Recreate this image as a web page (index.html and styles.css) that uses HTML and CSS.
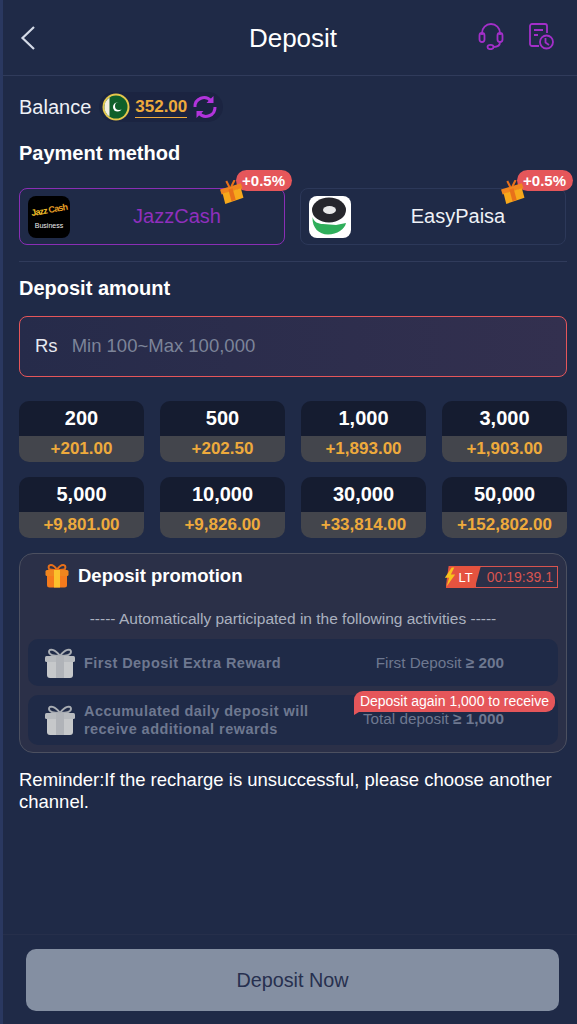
FILE: index.html
```html
<!DOCTYPE html>
<html lang="en">
<head>
    <meta charset="UTF-8">
    <meta name="viewport" content="width=device-width, initial-scale=1.0">
    <title>Deposit</title>
    <link rel="stylesheet" href="styles.css">
</head>
<body>
    <div class="page">
        <header class="topbar">
            <svg class="back" width="18" height="26" viewBox="0 0 18 26"><path d="M15 2 L3.500 13 L15 24" fill="none" stroke="#d5dbe8" stroke-width="2.200"/></svg>
            <h1>Deposit</h1>
            <div class="topbar-icons">
                <svg width="28" height="28" viewBox="0 0 28 28" fill="none" stroke="#a32fc9" stroke-width="1.800">
                    <path d="M5 13 V11 a9 9 0 0 1 18 0 V13"/>
                    <rect x="2.500" y="11" width="5" height="9" rx="2.500"/>
                    <rect x="20.500" y="11" width="5" height="9" rx="2.500"/>
                    <path d="M23 20 C23 24 20 25 16.500 25"/>
                    <ellipse cx="13.500" cy="25" rx="3" ry="2.200"/>
                </svg>
                <svg width="28" height="28" viewBox="0 0 28 28" fill="none" stroke="#a32fc9" stroke-width="1.800">
                    <path d="M11 24 H4 a2 2 0 0 1 -2 -2 V4 a2 2 0 0 1 2 -2 H17 a2 2 0 0 1 2 2 V11"/>
                    <path d="M6 8 H15 M6 13 H10"/>
                    <circle cx="18.500" cy="20" r="6.500"/>
                    <path d="M17.500 16 V20.500 L21 23"/>
                </svg>
            </div>
        </header>

        <main class="content">
            <div class="balance-row">
                <span class="balance-label">Balance</span>
                <div class="balance-pill">
                    <svg width="28" height="28" viewBox="0 0 28 28">
                        <circle cx="14" cy="14" r="13.500" fill="#e4c74c"/>
                        <circle cx="14" cy="14" r="11.500" fill="#0f5f2a"/>
                        <path d="M2.500 14 a11.500 11.500 0 0 1 5 -9.500 V23.500 a11.500 11.500 0 0 1 -5 -9.500 Z" fill="#f3efe0"/>
                        <circle cx="15.500" cy="14" r="4.500" fill="#fff"/>
                        <circle cx="17" cy="13" r="4" fill="#0f5f2a"/>
                    </svg>
                    <span class="balance-value">352.00</span>
                    <svg width="26" height="26" viewBox="0 0 26 26" fill="none" stroke="#b234dc" stroke-width="3">
                        <path d="M3 13 a9 9 0 0 1 16 -6"/>
                        <path d="M23 13 a9 9 0 0 1 -16 6"/>
                        <path d="M21.500 2 V9 H14.500 Z" fill="#b234dc" stroke="none"/>
                        <path d="M4.500 24 V17 H11.500 Z" fill="#b234dc" stroke="none"/>
                    </svg>
                </div>
            </div>

            <h2 class="section-title method-title">Payment method</h2>
            <div class="methods">
                <div class="method method-active">
                    <div class="method-logo logo-jazz">
                        <span class="jazz-name"><span class="jazz-word">Jazz</span> <span class="cash-word">Cash</span></span>
                        <span class="jazz-sub">Business</span>
                    </div>
                    <span class="method-name">JazzCash</span>
                    <div class="bonus">
                        <svg class="gift" width="25" height="25" viewBox="0 0 24 24">
                            <path d="M1 9 L21 3 L22.500 8 L2.500 14 Z" fill="#f0851e"/>
                            <path d="M3.500 13 L21 8 L23.500 17 L6 23 Z" fill="#f7a81b"/>
                            <path d="M9 9 L13 8 L16 19 L12 20.500 Z" fill="#e8701a"/>
                            <path d="M10 7 L7 1 M12 6 L15 0" stroke="#e8701a" stroke-width="2"/>
                        </svg>
                        <span class="bonus-tag">+0.5%</span>
                    </div>
                </div>
                <div class="method">
                    <div class="method-logo logo-easy">
                        <svg width="42" height="42" viewBox="0 0 42 42">
                            <path d="M3.500 21 C5 26 9 28 14 28 L27 29 L37 27 C36 33 28 38.500 19 38.500 C10 38.500 3 32 3.500 21 Z" fill="#2fae5b"/>
                            <ellipse cx="20" cy="14" rx="17" ry="12.500" fill="#26262c"/>
                            <ellipse cx="20.500" cy="14" rx="6.500" ry="4" fill="#e8e8e8"/>
                        </svg>
                    </div>
                    <span class="method-name">EasyPaisa</span>
                    <div class="bonus">
                        <svg class="gift" width="25" height="25" viewBox="0 0 24 24">
                            <path d="M1 9 L21 3 L22.500 8 L2.500 14 Z" fill="#f0851e"/>
                            <path d="M3.500 13 L21 8 L23.500 17 L6 23 Z" fill="#f7a81b"/>
                            <path d="M9 9 L13 8 L16 19 L12 20.500 Z" fill="#e8701a"/>
                            <path d="M10 7 L7 1 M12 6 L15 0" stroke="#e8701a" stroke-width="2"/>
                        </svg>
                        <span class="bonus-tag">+0.5%</span>
                    </div>
                </div>
            </div>

            <div class="divider"></div>

            <h2 class="section-title amount-title">Deposit amount</h2>
            <div class="amount-input">
                <span class="currency">Rs</span>
                <span class="placeholder">Min 100~Max 100,000</span>
            </div>

            <div class="amounts">
                <div class="amount"><div class="amount-top">200</div><div class="amount-bottom">+201.00</div></div>
                <div class="amount"><div class="amount-top">500</div><div class="amount-bottom">+202.50</div></div>
                <div class="amount"><div class="amount-top">1,000</div><div class="amount-bottom">+1,893.00</div></div>
                <div class="amount"><div class="amount-top">3,000</div><div class="amount-bottom">+1,903.00</div></div>
                <div class="amount"><div class="amount-top">5,000</div><div class="amount-bottom">+9,801.00</div></div>
                <div class="amount"><div class="amount-top">10,000</div><div class="amount-bottom">+9,826.00</div></div>
                <div class="amount"><div class="amount-top">30,000</div><div class="amount-bottom">+33,814.00</div></div>
                <div class="amount"><div class="amount-top">50,000</div><div class="amount-bottom">+152,802.00</div></div>
            </div>

            <section class="promo">
                <div class="promo-head">
                    <div class="promo-title">
                        <svg width="26" height="26" viewBox="0 0 26 26">
                            <path d="M13 7 C9 0 3 1 5 6 C6 7 9 7 13 7 C17 7 20 7 21 6 C23 1 17 0 13 7 Z" fill="none" stroke="#e8701a" stroke-width="2"/>
                            <rect x="1.500" y="7" width="23" height="6" rx="1.500" fill="#f0851e"/>
                            <path d="M3 13 H23 V22 a2.500 2.500 0 0 1 -2.500 2.500 H5.500 A2.500 2.500 0 0 1 3 22 Z" fill="#f57a1c"/>
                            <rect x="10" y="7" width="6" height="17.500" fill="#fcc12c"/>
                        </svg>
                        <span>Deposit promotion</span>
                    </div>
                    <div class="timer">
                        <div class="timer-tag">
                            <svg width="12" height="20" viewBox="0 0 14 22"><path d="M9 0 L1 12 H6 L3 22 L13 8 H8 L12 0 Z" fill="#f7c21c"/></svg>
                            <span>LT</span>
                        </div>
                        <span class="timer-value">00:19:39.1</span>
                    </div>
                </div>
                <p class="promo-note">----- Automatically participated in the following activities -----</p>
                <div class="promo-row">
                    <svg class="silver-gift" width="32" height="32" viewBox="0 0 32 32">
                        <path d="M16 9 C11 2 5 1 5 5 C5 8 10 9 16 9 C22 9 27 8 27 5 C27 1 21 2 16 9 Z" fill="none" stroke="#a9adb3" stroke-width="2"/>
                        <rect x="1" y="9" width="30" height="6" rx="1.500" fill="#b8bbbf"/>
                        <path d="M3 15 H29 V28 a3 3 0 0 1 -3 3 H6 a3 3 0 0 1 -3 -3 Z" fill="#c6c8ca"/>
                        <rect x="12" y="9" width="8" height="22" fill="#b0b3b8"/>
                    </svg>
                    <span class="promo-name">First Deposit Extra Reward</span>
                    <span class="promo-req">First Deposit <b>≥ 200</b></span>
                </div>
                <div class="promo-row promo-row-last">
                    <svg class="silver-gift" width="32" height="32" viewBox="0 0 32 32">
                        <path d="M16 9 C11 2 5 1 5 5 C5 8 10 9 16 9 C22 9 27 8 27 5 C27 1 21 2 16 9 Z" fill="none" stroke="#a9adb3" stroke-width="2"/>
                        <rect x="1" y="9" width="30" height="6" rx="1.500" fill="#b8bbbf"/>
                        <path d="M3 15 H29 V28 a3 3 0 0 1 -3 3 H6 a3 3 0 0 1 -3 -3 Z" fill="#c6c8ca"/>
                        <rect x="12" y="9" width="8" height="22" fill="#b0b3b8"/>
                    </svg>
                    <span class="promo-name">Accumulated daily deposit will<br>receive additional rewards</span>
                    <span class="promo-req">Total deposit <b>≥ 1,000</b></span>
                    <span class="promo-bubble">Deposit again 1,000 to receive</span>
                </div>
            </section>

            <p class="reminder">Reminder:If the recharge is unsuccessful, please choose another channel.</p>
        </main>

        <footer class="footer">
            <button class="submit">Deposit Now</button>
        </footer>
    </div>
</body>
</html>
```

FILE: styles.css
```css
* {
    box-sizing: border-box;
}
body {
    margin: 0;
    background-color: #1f2a47;
    font-family: "Liberation Sans", Arial, sans-serif;
    color: #eef1f6;
}
.page {
    height: 1024px;
    border-left: 3px solid #2a3860;
    display: flex;
    flex-direction: column;
    overflow: hidden;
}

/* header */
.topbar {
    height: 76px;
    flex: none;
    border-bottom: 1px solid #303b5b;
    display: flex;
    align-items: center;
    position: relative;
    padding: 0 21px 0 16px;
}
.topbar h1 {
    position: absolute;
    left: 6px;
    right: 0;
    margin: 2px 0 0;
    text-align: center;
    font-size: 26px;
    font-weight: 400;
    color: #fff;
}
.topbar-icons {
    margin-left: auto;
    display: flex;
    gap: 23px;
    margin-top: -3px;
}

.content {
    flex: 1;
    padding: 0 10px 0 16px;
}

/* balance */
.balance-row {
    display: flex;
    align-items: center;
    gap: 8px;
    height: 34px;
    margin-top: 14px;
}
.balance-label {
    font-size: 20px;
}
.balance-pill {
    display: flex;
    align-items: center;
    gap: 5px;
    height: 30px;
    padding: 0 5px 0 3px;
    border-radius: 15px;
    background: #1b2441;
}
.balance-value {
    font-size: 17px;
    font-weight: 700;
    color: #eeaa3c;
    border-bottom: 1px solid #eeaa3c;
    line-height: 21px;
}

.section-title {
    margin: 0;
    font-size: 20px;
    font-weight: 700;
    color: #fff;
    line-height: 24px;
}
.method-title {
    margin-top: 17px;
}
.amount-title {
    margin-top: 14px;
}

/* payment methods */
.methods {
    display: grid;
    grid-template-columns: 266px 266px;
    gap: 15px;
    margin-top: 23px;
}
.method {
    height: 57px;
    border: 1px solid #2c3859;
    border-radius: 8px;
    display: flex;
    align-items: center;
    padding-left: 8px;
    position: relative;
}
.method-active {
    border-color: #8a2eb5;
}
.method-logo {
    width: 42px;
    height: 42px;
    flex: none;
    border-radius: 8px;
    overflow: hidden;
}
.logo-jazz {
    background: #000;
    display: flex;
    flex-direction: column;
    align-items: center;
    justify-content: center;
    gap: 7px;
}
.jazz-name {
    font-size: 9px;
    font-weight: 700;
    transform: rotate(-10deg);
    letter-spacing: -0.8px;
    white-space: nowrap;
}
.jazz-word {
    color: #f5c02a;
}
.cash-word {
    color: #e9a126;
}
.jazz-sub {
    font-size: 7px;
    color: #eee;
}
.logo-easy {
    background: #fff;
}
.method-name {
    flex: 1;
    text-align: center;
    font-size: 20px;
}
.method-active .method-name {
    color: #8f2fbd;
}
.bonus {
    position: absolute;
    right: -8px;
    top: -19px;
}
.bonus-tag {
    display: block;
    background: #e5565a;
    color: #fff;
    font-size: 15px;
    font-weight: 700;
    line-height: 21px;
    padding: 0 7px 0 6px;
    border-radius: 11px;
}
.gift {
    position: absolute;
    left: -17px;
    top: 10px;
}

.divider {
    height: 1px;
    background: #303b5b;
    margin-top: 16px;
}

/* amount */
.amount-input {
    height: 61px;
    margin-top: 16px;
    border: 1px solid #e5565a;
    border-radius: 8px;
    background: linear-gradient(90deg, #262b4a, #33304f);
    display: flex;
    align-items: center;
    padding: 0 0 1px 15px;
    font-size: 18.500px;
}
.currency {
    color: #e6e9f0;
    margin-right: 14px;
}
.placeholder {
    color: #7c8499;
}
.amounts {
    display: grid;
    grid-template-columns: repeat(4, 125px);
    column-gap: 16px;
    row-gap: 15px;
    margin-top: 24px;
}
.amount {
    height: 61px;
    border-radius: 10px;
    overflow: hidden;
    text-align: center;
    font-weight: 700;
}
.amount-top {
    height: 35px;
    background: #151c30;
    color: #fff;
    font-size: 20px;
    line-height: 35px;
}
.amount-bottom {
    height: 26px;
    background: #43454c;
    color: #eeaa3c;
    font-size: 17px;
    line-height: 26px;
}

/* promo */
.promo {
    height: 200px;
    margin-top: 15px;
    border: 1px solid #4c5060;
    border-radius: 14px;
    background: #2b3048;
    padding: 0 8px;
}
.promo-head {
    height: 44px;
    display: flex;
    align-items: center;
    justify-content: space-between;
}
.promo-title {
    display: flex;
    align-items: center;
    gap: 8px;
    padding-left: 16px;
    font-size: 18.500px;
    font-weight: 700;
    color: #fff;
}
.timer {
    display: flex;
    align-items: stretch;
    height: 22px;
    margin-top: 2px;
}
.timer-tag {
    display: flex;
    align-items: center;
    gap: 3px;
    position: relative;
    padding: 0 8px 0 0;
    font-size: 13px;
    color: #fff;
    margin-right: -6px;
}
.timer-tag::before {
    content: "";
    position: absolute;
    top: 0;
    right: 0;
    bottom: 0;
    left: 2px;
    background: #e5533f;
    clip-path: polygon(3px 0, 100% 0, calc(100% - 6px) 100%, 0 100%);
}
.timer-tag svg,
.timer-tag span {
    position: relative;
}
.timer-value {
    border: 1px solid #d8544f;
    color: #d8544f;
    font-size: 14px;
    line-height: 20px;
    padding: 0 4px 0 11px;
}
.promo-note {
    margin: 11px 0 0;
    text-align: center;
    font-size: 15.500px;
    line-height: 20px;
    color: #aab0bf;
}
.promo-row {
    height: 47px;
    margin-top: 10px;
    display: flex;
    align-items: center;
    padding-left: 16px;
    border-radius: 10px;
    background: #1f2a47;
    position: relative;
}
.promo-row-last {
    height: 50px;
    margin-top: 9px;
}
.silver-gift {
    flex: none;
}
.promo-name {
    width: 256px;
    margin-left: 8px;
    font-size: 14.500px;
    font-weight: 700;
    letter-spacing: 0.45px;
    line-height: 18px;
    color: #6e7890;
    white-space: nowrap;
}
.promo-req {
    flex: 1;
    text-align: right;
    padding-right: 54px;
    font-size: 15.300px;
    color: #6e7890;
    white-space: nowrap;
}
.promo-row-last .promo-req {
    padding-bottom: 2px;
}
.promo-bubble {
    position: absolute;
    right: 3px;
    top: -4px;
    background: #e5565a;
    color: #fff;
    font-size: 14px;
    line-height: 21px;
    padding: 0 6px;
    border-radius: 9px 9px 9px 0;
}
.promo-bubble::after {
    content: "";
    position: absolute;
    left: 0;
    top: 100%;
    border-top: 3px solid #e5565a;
    border-right: 5px solid transparent;
}

.reminder {
    margin: 16px 0 0;
    font-size: 18.500px;
    line-height: 22px;
    color: #fff;
}

/* footer */
.footer {
    height: 90px;
    flex: none;
    border-top: 1px solid #262f4b;
    padding: 14px 18px 0 23px;
}
.submit {
    width: 100%;
    height: 62px;
    border: none;
    border-radius: 10px;
    background: #848fa2;
    color: #27304f;
    font-family: inherit;
    font-size: 19.800px;
}
```
